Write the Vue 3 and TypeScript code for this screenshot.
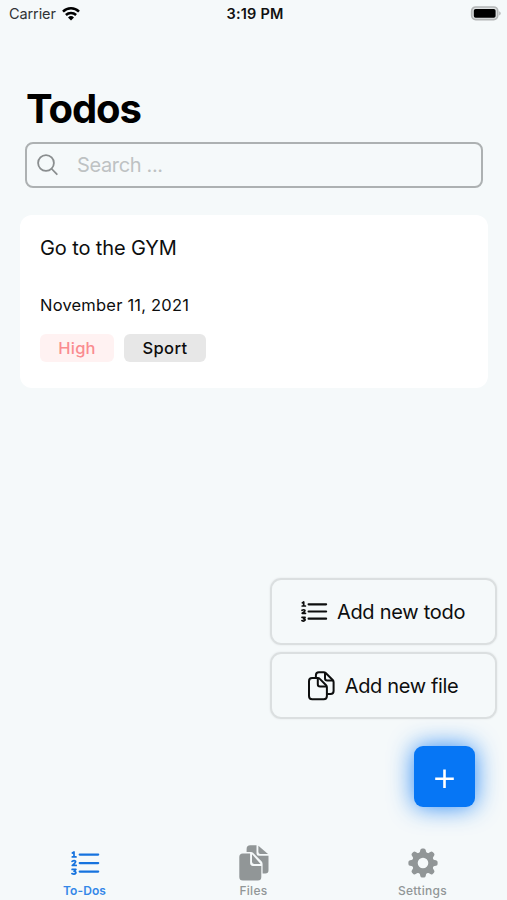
<script setup lang="ts">
import { ref } from 'vue'

interface Tag {
  label: string
  kind: 'high' | 'category'
}

interface Todo {
  id: number
  title: string
  date: string
  tags: Tag[]
}

interface Tab {
  id: 'todos' | 'files' | 'settings'
  label: string
}

const query = ref('')
const activeTab = ref<Tab['id']>('todos')

const todos: Todo[] = [
  {
    id: 1,
    title: 'Go to the GYM',
    date: 'November 11, 2021',
    tags: [
      { label: 'High', kind: 'high' },
      { label: 'Sport', kind: 'category' },
    ],
  },
]

const tabs: Tab[] = [
  { id: 'todos', label: 'To-Dos' },
  { id: 'files', label: 'Files' },
  { id: 'settings', label: 'Settings' },
]
</script>

<template>
  <div class="screen">
    <header class="status">
      <div class="carrier">
        <span>Carrier</span>
        <svg class="wifi" viewBox="0 0 18 14" aria-hidden="true">
          <path d="M1 4.600a11.400 11.400 0 0 1 16 0" />
          <path d="M3.900 8a7.400 7.400 0 0 1 10.200 0" />
          <path class="dot" d="M9 13.600 6 10.500a4.300 4.300 0 0 1 6 0z" />
        </svg>
      </div>
      <div class="clock">3:19 PM</div>
      <div class="power">
        <svg class="battery" viewBox="0 0 31 15" aria-hidden="true">
          <rect x="1.700" y="1" width="26" height="12.600" rx="4" fill="#dfe2e3" stroke="#b3b5b6" stroke-width="1.700" />
          <rect x="3.800" y="2.900" width="21.800" height="8.800" rx="1.800" fill="#000" />
          <path d="M29.200 5.200c2 .8 2 3.400 0 4.200z" fill="#b3b5b6" />
        </svg>
      </div>
    </header>

    <h1 class="title">Todos</h1>

    <label class="search">
      <svg class="search-icon" viewBox="0 0 22 22" aria-hidden="true">
        <circle cx="9" cy="9" r="7.900" />
        <path d="m14.800 15 5 5.200" />
      </svg>
      <input v-model="query" type="text" placeholder="Search ..." />
    </label>

    <main class="list">
      <article v-for="todo in todos" :key="todo.id" class="card">
        <h2 class="card-title">{{ todo.title }}</h2>
        <p class="card-date">{{ todo.date }}</p>
        <div class="tags">
          <span v-for="tag in todo.tags" :key="tag.label" class="tag" :class="tag.kind">{{ tag.label }}</span>
        </div>
      </article>
    </main>

    <section class="actions">
      <button class="action todo" type="button">
        <svg class="list-icon" viewBox="0 0 30 26" aria-hidden="true">
          <path class="digits" d="M3.300 3.900 4.700 3v4M3.200 7h3.200M3 11.300q1.900-1.100 2.900 0 .2 1.100-2.700 3h3.300M3 18.300h3.100l-1.500 1.600q1.700.1 1.500 1.200-1.200 1.600-3.200.5" />
          <path class="lines" d="M9.600 5.300h17.500M9.600 12.500h17.500M9.600 19.700h17.500" />
        </svg>
        <span>Add new todo</span>
      </button>
      <button class="action file" type="button">
        <svg class="file-icon" viewBox="0 0 28 30" aria-hidden="true">
          <path d="M4.200 7h5.500q1.300 0 2.100.9l6.300 6.300q.8.800.8 2v8.900q0 3.200-3.200 3.200H4.200Q1 28.300 1 25.100V10.200Q1 7 4.200 7z" />
          <path d="M9.800 7.200v6.100q0 2.300 2.300 2.300h6.500" />
          <path d="M7.900 7V4.200Q7.900 1.200 10.900 1.200h4.800q1.200 0 2 .8l7 7q.9.900.9 2.200v8.800q0 3.100-3.100 3.100h-3.200" />
          <path d="M17 1.500v5.700q0 2.200 2.200 2.200h6" />
        </svg>
        <span>Add new file</span>
      </button>
      <button class="fab" type="button" aria-label="Add">
        <svg viewBox="0 0 20 20" aria-hidden="true"><path d="M9.500 .5v18.500M.2 9.800h18.600" /></svg>
      </button>
    </section>

    <nav class="tabs">
      <button
        v-for="tab in tabs"
        :key="tab.id"
        type="button"
        class="tab"
        :class="[tab.id, { active: tab.id === activeTab }]"
        @click="activeTab = tab.id"
      >
        <span class="tab-icon">
          <svg v-if="tab.id === 'todos'" class="list-icon" viewBox="0 0 30 26" aria-hidden="true">
            <path class="digits" d="M2.400 3 4 2v4.900M2.300 6.900H6M2.100 11.400q2.200-1.500 3.500 0 .2 1.400-3.300 4h3.900M2.100 19.400h3.800l-1.800 2q2 .1 1.800 1.600-1.400 2-4 .6" />
            <path class="lines" d="M9.700 4.600h18.500M9.700 13.100h18.500M9.700 21.600h18.500" />
          </svg>
          <svg v-else-if="tab.id === 'files'" class="files-icon" viewBox="0 0 30 36" aria-hidden="true">
            <path d="M7.600 7V4q0-3.700 3.700-3.700h6.200v8.100q0 2.300 2.300 2.300h9.700v14.500q0 3.200-3.200 3.200h-2.700V19q0-1.600-1.100-2.700L14 7.800Q13.200 7 12 7z" />
            <path d="M19.400.7 29 9.100h-7.600q-2 0-2-2z" />
            <path d="M3.800 8.500h7.300v9.600q0 2.800 2.800 2.800h8.400v11q0 3.500-3.500 3.500h-15Q.3 35.400.3 31.900V12q0-3.500 3.500-3.500z" />
            <path d="M13 9.200 21.600 18.900h-6.500q-2.100 0-2.100-2.100z" />
          </svg>
          <svg v-else class="gear-icon" viewBox="-15 -15 30 30" aria-hidden="true">
            <circle r="8.100" />
            <path
              v-for="n in 8"
              :key="n"
              :transform="`rotate(${n * 45})`"
              d="M-4.700-9.400Q-3.200-10-3-11.500L-2.700-13Q-2.300-14.600-.9-14.600H.9Q2.300-14.600 2.700-13L3-11.500Q3.200-10 4.700-9.400z"
            />
          </svg>
        </span>
        <span class="tab-label">{{ tab.label }}</span>
      </button>
    </nav>
  </div>
</template>

<style>
body {
  background: #f5f9fa;
}
</style>

<style scoped>
.screen {
  box-sizing: border-box;
  display: flex;
  flex-direction: column;
  height: 900px;
  overflow: hidden;
  background: #f5f9fa;
  color: #0d0e0e;
  font-family: Inter, "Liberation Sans", sans-serif;
}

button {
  padding: 0;
  border: 0;
  background: none;
  color: inherit;
  font: inherit;
}

svg {
  display: block;
  flex: none;
}

.status {
  display: grid;
  grid-template-columns: 1fr auto 1fr;
  align-items: center;
  height: 27px;
  padding: 0 6px 0 9px;
  font-size: 14.5px;
}

.carrier {
  display: flex;
  align-items: center;
  gap: 6px;
  color: #303335;
  letter-spacing: -0.1px;
}

.wifi {
  width: 18px;
  height: 14px;
  fill: none;
  stroke: #000;
  stroke-width: 2.5;
}

.wifi .dot {
  fill: #000;
  stroke: none;
}

.clock {
  color: #111;
  font-weight: 600;
  letter-spacing: 0.2px;
}

.power {
  display: flex;
  justify-content: flex-end;
}

.battery {
  width: 31px;
  height: 15px;
}

.title {
  margin: 57px 0 0 26px;
  color: #000;
  font-size: 40px;
  font-weight: 700;
  letter-spacing: -1.1px;
  line-height: 50px;
}

.search {
  box-sizing: border-box;
  display: flex;
  align-items: center;
  gap: 18px;
  height: 46px;
  margin: 7.5px 24px 0 24.5px;
  padding: 0 10.5px;
  border: 2px solid #adb1b2;
  border-radius: 8px;
}

.search-icon {
  width: 22px;
  height: 22px;
  fill: none;
  stroke: #8a8e8f;
  stroke-width: 1.8;
  stroke-linecap: round;
}

.search input {
  flex: 1;
  min-width: 0;
  padding: 0;
  border: 0;
  outline: 0;
  background: none;
  color: #111;
  font: 400 20px/26px Inter, "Liberation Sans", sans-serif;
  letter-spacing: -0.35px;
}

.search input::placeholder {
  color: #bec2c3;
  opacity: 1;
}

.list {
  flex: 1;
  padding: 27.5px 19px 0 20px;
}

.card {
  box-sizing: border-box;
  height: 173px;
  padding: 20px;
  border-radius: 12px;
  background: #fff;
}

.card-title {
  margin: 0;
  font-size: 20px;
  font-weight: 400;
  letter-spacing: -0.12px;
  line-height: 27px;
}

.card-date {
  margin: 32px 0 0;
  font-size: 16.5px;
  letter-spacing: 0.2px;
  line-height: 22px;
}

.tags {
  display: flex;
  gap: 10px;
  margin-top: 17.5px;
}

.tag {
  box-sizing: border-box;
  width: 74px;
  height: 28px;
  border-radius: 6px;
  font-size: 16.5px;
  font-weight: 500;
  letter-spacing: 0.25px;
  line-height: 28px;
  text-align: center;
}

.tag.high {
  background: #fff2f2;
  color: #fa8c90;
}

.tag.category {
  width: 82px;
  background: #e7e7e7;
  color: #0d0d0d;
  letter-spacing: 0.35px;
}

.actions {
  display: flex;
  flex-direction: column;
  align-items: flex-end;
  padding: 0 10px 0 0;
}

.action {
  box-sizing: border-box;
  display: flex;
  align-items: center;
  justify-content: center;
  width: 227px;
  height: 67px;
  margin-bottom: 7px;
  border: 2px solid #dbdfe0;
  border-radius: 11px;
  box-shadow: 0 0 2px #dfe3e4;
  font-size: 20px;
  letter-spacing: -0.28px;
}

.action span {
  padding-top: 1px;
}

.list-icon {
  width: 30px;
  height: 26px;
  fill: none;
  stroke: currentColor;
  stroke-linecap: round;
  stroke-linejoin: round;
}

.digits {
  stroke-width: 1.7;
}

.lines {
  stroke-width: 2.2;
}

.todo {
  gap: 8px;
  padding-right: 3px;
}

.file {
  gap: 9px;
  padding-right: 1px;
  letter-spacing: -0.35px;
}

.file-icon {
  width: 28px;
  height: 30px;
  fill: none;
  stroke: currentColor;
  stroke-width: 2;
  stroke-linejoin: round;
}

.fab {
  display: grid;
  place-items: center;
  width: 61px;
  height: 61px;
  margin: 20px 22px 0 0;
  border-radius: 9px;
  background: #0676f5;
  box-shadow: 0 0 24px rgba(6, 118, 245, 0.85);
}

.fab svg {
  width: 20px;
  height: 20px;
  margin-top: 5px;
  fill: none;
  stroke: #fff;
  stroke-width: 2.6;
}

.tabs {
  display: grid;
  grid-template-columns: repeat(3, 1fr);
  height: 60px;
  margin-top: 33px;
}

.tab {
  display: flex;
  flex-direction: column;
  align-items: center;
  padding-top: 4px;
  color: #919697;
  font-size: 12px;
  font-weight: 500;
  line-height: 16px;
}

.tab.active {
  color: #1673de;
}

.tab-icon {
  display: grid;
  place-items: center;
  height: 38px;
}

.files-icon {
  width: 30px;
  height: 36px;
  fill: currentColor;
}

.gear-icon {
  width: 30px;
  height: 30px;
  fill: currentColor;
}

.gear-icon circle {
  fill: none;
  stroke: currentColor;
  stroke-width: 5.6;
}

.tab-label {
  margin-top: 1px;
  letter-spacing: 0.3px;
}

.active .tab-label {
  color: #3487e8;
  font-weight: 600;
  letter-spacing: 0.1px;
}
</style>
